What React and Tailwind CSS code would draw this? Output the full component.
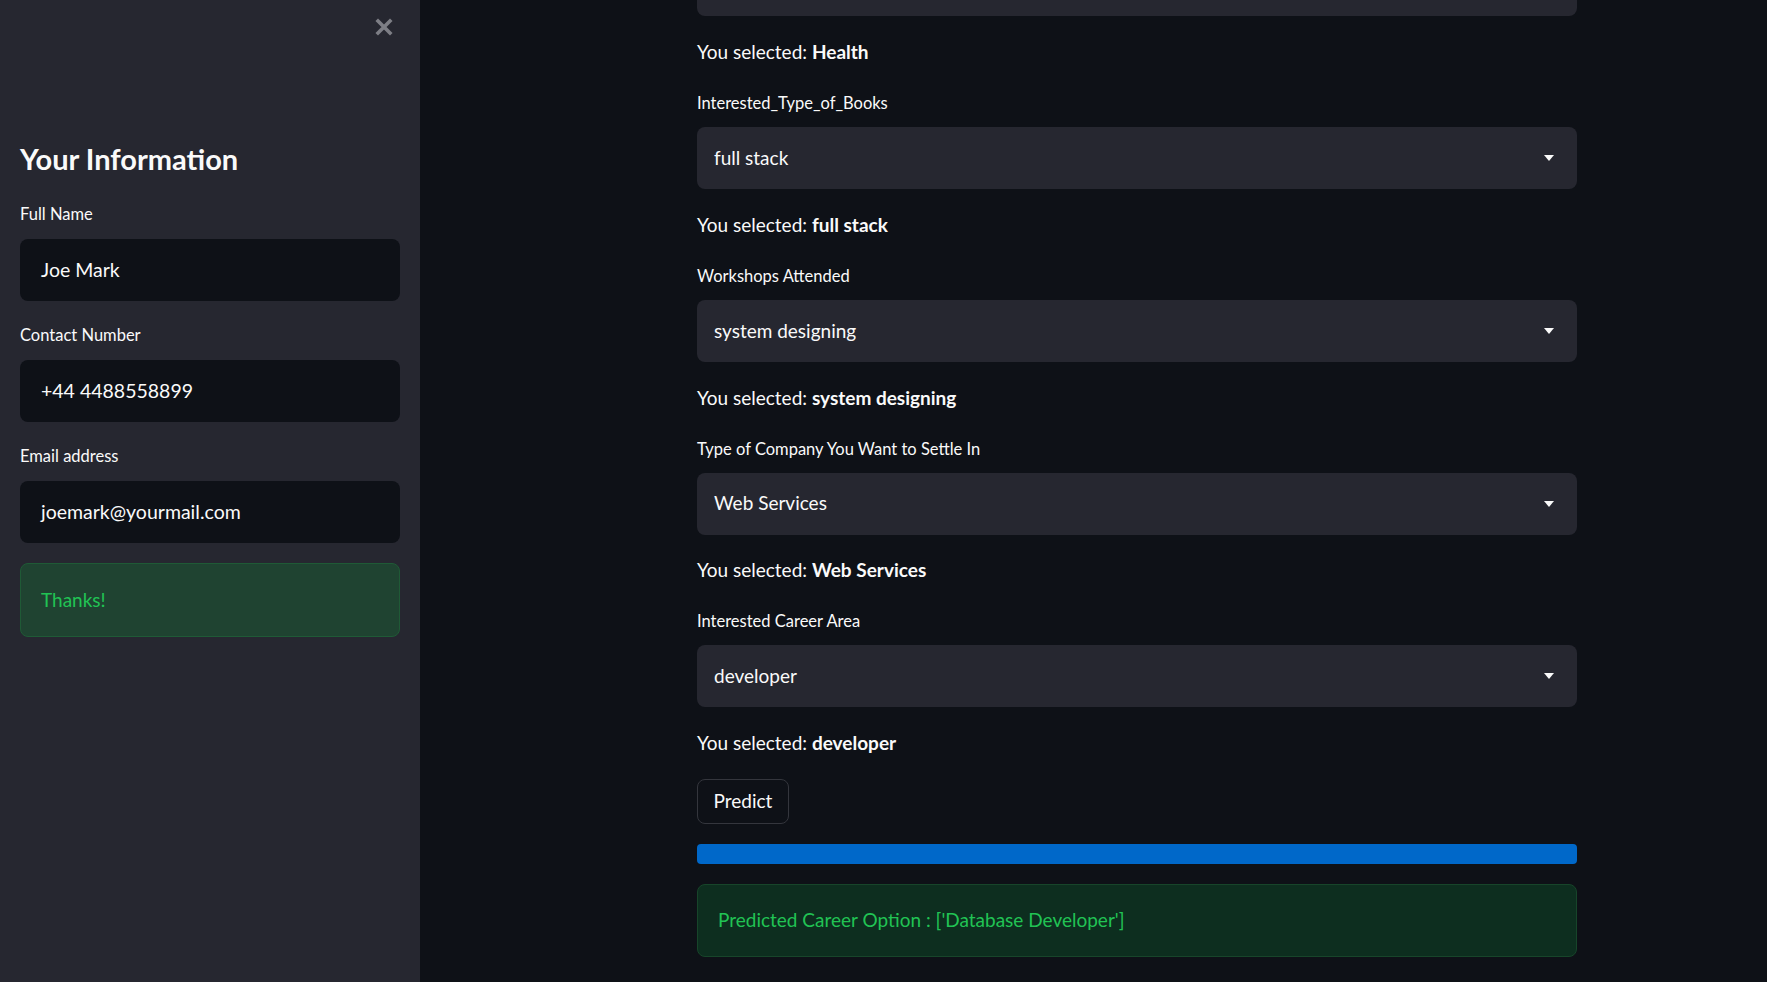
const font = { fontFamily: "Lato, 'Noto Sans', sans-serif" };

function Caret() {
  return (
    <svg width="10" height="6" viewBox="0 0 10 6" className="shrink-0">
      <path d="M0 0 L10 0 L5 6 Z" fill="#fafafa" />
    </svg>
  );
}

function Select({ value }) {
  return (
    <div className="h-[62px] rounded-lg bg-[#262730] flex items-center justify-between pl-[17px] pr-[23px]">
      <span className="text-[19px] text-[#fafafa]">{value}</span>
      <Caret />
    </div>
  );
}

function Selected({ value }) {
  return (
    <p className="h-[28px] leading-[28px] text-[19px] text-[#fafafa]">
      You selected: <span className="font-bold">{value}</span>
    </p>
  );
}

function Label({ children }) {
  return <p className="h-[22px] leading-[22px] text-[16.5px] text-[#fafafa]">{children}</p>;
}

function Field({ label, value, first }) {
  return (
    <div className={first ? "" : "mt-[23px]"}>
      <Label>{label}</Label>
      <div className="mt-[14px] h-[62px] rounded-lg bg-[#0e1117] flex items-center px-[21px]">
        <span className="text-[19.5px] text-[#fafafa]">{value}</span>
      </div>
    </div>
  );
}

const rows = [
  { label: "Interested_Type_of_Books", value: "full stack" },
  { label: "Workshops Attended", value: "system designing" },
  { label: "Type of Company You Want to Settle In", value: "Web Services" },
  { label: "Interested Career Area", value: "developer" },
];

export default function App() {
  return (
    <div className="h-[982px] w-full flex overflow-hidden bg-[#0e1117]" style={font}>
      {/* sidebar */}
      <aside className="w-[420px] shrink-0 bg-[#262730] px-5 relative">
        <button className="absolute left-[375px] top-[18px]">
          <svg width="18" height="18" viewBox="0 0 18 18">
            <path d="M3 3 L15 15 M15 3 L3 15" stroke="#7d7e85" strokeWidth="3.6" strokeLinecap="square" />
          </svg>
        </button>
        <h2 className="mt-[139px] h-[40px] leading-[40px] text-[29px] font-bold text-[#fafafa]">
          Your Information
        </h2>
        <div className="mt-[24px]">
          <Field first label="Full Name" value="Joe Mark" />
          <Field label="Contact Number" value="+44 4488558899" />
          <Field label="Email address" value="joemark@yourmail.com" />
        </div>
        <div className="mt-[20px] h-[74px] rounded-lg bg-[#1f4331] border border-[#1f5a36] flex items-center px-5">
          <span className="text-[19px] text-[#21c354]">Thanks!</span>
        </div>
      </aside>

      {/* main */}
      <main className="flex-1 overflow-hidden">
        <div className="ml-[277px] w-[880px] -mt-[46px]">
          <div className="h-[62px] rounded-lg bg-[#262730]" />
          <div className="mt-[22px]">
            <Selected value="Health" />
          </div>
          {rows.map((r) => (
            <div key={r.label}>
              <div className="mt-[26px]">
                <Label>{r.label}</Label>
              </div>
              <div className="mt-[13px]">
                <Select value={r.value} />
              </div>
              <div className="mt-[21.75px]">
                <Selected value={r.value} />
              </div>
            </div>
          ))}
          <button className="mt-[22px] h-[45px] w-[92px] rounded-lg border border-[#34363d] bg-[#0e1117] text-[19px] text-[#fafafa]">
            Predict
          </button>
          <div className="mt-[20px] h-[20px] rounded bg-[#0068c9]" />
          <div className="mt-[20px] h-[73px] rounded-lg bg-[#0d2e1f] border border-[#17452a] flex items-center px-5">
            <span className="text-[19px] text-[#21c354]">
              Predicted Career Option : ['Database Developer']
            </span>
          </div>
        </div>
      </main>
    </div>
  );
}
